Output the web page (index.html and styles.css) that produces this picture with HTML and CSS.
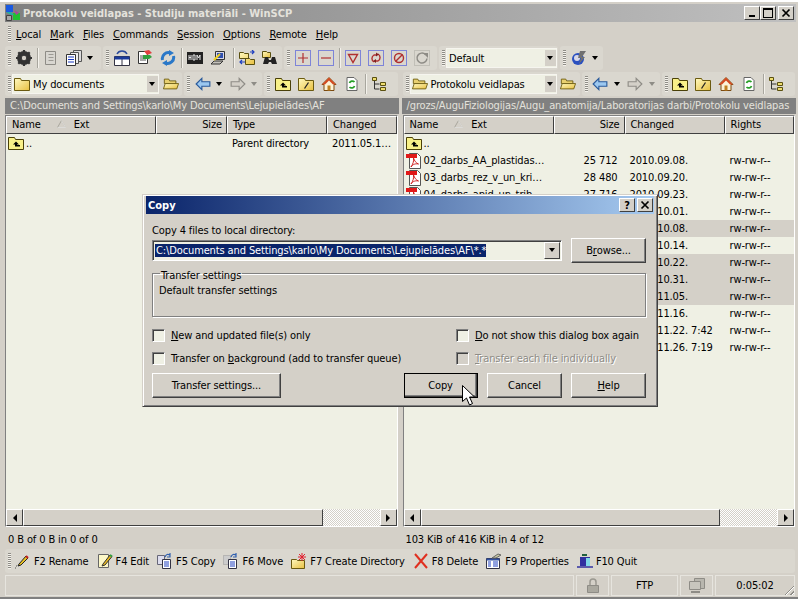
FILE: index.html
```html
<!DOCTYPE html>
<html lang="en">
<head>
<meta charset="UTF-8">
<title>Protokolu veidlapas - Studiju materiāli - WinSCP</title>
<link rel="stylesheet" href="styles.css">
</head>
<body>
<svg class="defs" width="0" height="0">
  <defs>
    <linearGradient id="fy" x1="0" y1="0" x2="1" y2="1"><stop offset="0" stop-color="#fff9c0"/><stop offset="1" stop-color="#e8c040"/></linearGradient>
    <symbol id="x" viewBox="0 0 10 10"><path d="M1.500 1.500l7 7M8.500 1.500l-7 7" stroke="#000" stroke-width="1.700"/></symbol>
    <symbol id="sort-up" viewBox="0 0 9 8"><path d="M4.500 .500L.500 7.500h8z" fill="none" stroke="#a8a69e"/><path d="M.500 7.500h8L4.500 .500" fill="none" stroke="#fff" stroke-width=".6"/></symbol>
    <symbol id="folder" viewBox="0 0 16 16"><path d="M.500 2.500h6l1 2h8v10H.500z" fill="url(#fy)" stroke="#6b5a10"/></symbol>
    <symbol id="folder-open" viewBox="0 0 18 16"><path d="M1.500 2.500h5l1 2h7v3h-13z" fill="#e8d070" stroke="#6b5a10"/><path d="M.500 13.500l2-6h15l-2 6z" fill="url(#fy)" stroke="#6b5a10"/></symbol>
    <symbol id="folder-up" viewBox="0 0 16 16"><path d="M.500 2.500h6l1 2h8v10H.500z" fill="#f8f088" stroke="#4a4008"/><path d="M8 6.500l-3 3h2v2h5v-1.500H9v-.5h2z" fill="#000"/></symbol>
    <symbol id="folder-root" viewBox="0 0 16 16"><path d="M.500 2.500h6l1 2h8v10H.500z" fill="url(#fy)" stroke="#6b5a10"/><path d="M10.500 6.500l-4 6" stroke="#222" stroke-width="1.300"/></symbol>
    <symbol id="home" viewBox="0 0 16 16"><path d="M8 1.500L1 8.500h2v6h10v-6h2z" fill="#fbf4d8" stroke="#7a4a10"/><path d="M8 1.500L1 8.500h3L8 4.500l4 4h3z" fill="#d24a20"/><path d="M6.500 9.500h3v5h-3z" fill="#c08020"/></symbol>
    <symbol id="refresh" viewBox="0 0 16 16"><path d="M3 1.500h7l3 3v10H3z" fill="#fff" stroke="#666"/><path d="M5.500 7a3 3 0 0 1 5-1M10.500 10a3 3 0 0 1-5 1" fill="none" stroke="#28a028" stroke-width="1.800"/></symbol>
    <symbol id="tree" viewBox="0 0 16 16"><path d="M3.500 5v8h5M3.500 8h5" fill="none" stroke="#333"/><path d="M1.500 1.500h4v3h-4zM9.500 6.500h5v3h-5zM9.500 11.500h5v3h-5z" fill="#eedd70" stroke="#5a5010"/></symbol>
    <symbol id="arrow-back" viewBox="0 0 14 12"><path d="M1 6l5-5v3h7v4H6v3z" fill="#9cc8f0" stroke="#2a5a9a"/></symbol>
    <symbol id="arrow-fwd" viewBox="0 0 14 12"><path d="M13 6L8 1v3H1v4h7v3z" fill="#d4d0c8" stroke="#8e8c86"/></symbol>
    <symbol id="pdf" viewBox="0 0 16 16"><path d="M3.500.500h8l3 3v12h-11z" fill="#fff" stroke="#555"/><path d="M0 1h11v4H0z" fill="#e01818"/><path d="M5 14c2-3 3-6 2.500-9 1 3 2.500 5 5 6-3-.5-5.500 0-7.500 3z" fill="none" stroke="#d02020"/></symbol>
    <symbol id="gear" viewBox="0 0 16 16"><circle cx="8" cy="8" r="5" fill="none" stroke="#333" stroke-width="4"/><path d="M8 0v16M0 8h16M2.300 2.300l11.400 11.400M13.700 2.300L2.300 13.700" stroke="#333" stroke-width="2.200"/><circle cx="8" cy="8" r="2.200" fill="#d4d0c8"/></symbol>
    <symbol id="book" viewBox="0 0 16 16"><path d="M2.500 1.500h10v13h-10z" fill="#d8d6d0" stroke="#8e8c86"/><path d="M5.500 4.500h5M5.500 7.500h5M5.500 10.500h5" stroke="#9c9a94"/></symbol>
    <symbol id="docs" viewBox="0 0 16 16"><path d="M7.500 .500h8v11h-8z" fill="#ddd" stroke="#555"/><path d="M4.500 2.500h8v11h-8z" fill="#eee" stroke="#555"/><path d="M.500 4.500h9v11h-9z" fill="#fff" stroke="#333"/><path d="M2 7h6M2 9.500h6M2 12h6" stroke="#1a3ac0"/></symbol>
    <symbol id="sync" viewBox="0 0 16 16"><path d="M.500 6.500h15v9H.500z" fill="#fff" stroke="#334"/><path d="M8 6.500v9" stroke="#334"/><path d="M.500 6.500h15v3H.500z" fill="#1a3a9a"/><path d="M3 4c2-4 8-4 10 0" fill="none" stroke="#28489a" stroke-width="1.500"/></symbol>
    <symbol id="compare" viewBox="0 0 16 16"><path d="M1.500 1.500h9v12h-9z" fill="#fff" stroke="#333"/><path d="M3 6h6M3 8h6M3 10h6" stroke="#555"/><path d="M7 1l5-1 3 3-5 2z" fill="#e04040"/><path d="M6 5h7l2 2-3 2H6z" fill="#30a040"/></symbol>
    <symbol id="reload" viewBox="0 0 16 16"><path d="M2.500 10a6 6 0 0 1 8-7" fill="none" stroke="#2a78c8" stroke-width="3"/><path d="M13.500 6a6 6 0 0 1-8 7" fill="none" stroke="#2a78c8" stroke-width="3"/><path d="M9 0l5 3-5 3zM7 10v6l-5-3z" fill="#2a78c8"/></symbol>
    <symbol id="console" viewBox="0 0 16 12"><rect width="16" height="12" fill="#222"/><path d="M2 3v5M2 5.500h2M4 3v5M6 3h2v5H6zM10 8V3l1.500 3L13 3v5" fill="none" stroke="#e8e8e8"/></symbol>
    <symbol id="putty" viewBox="0 0 16 16"><path d="M5.500 1.500h9v8h-9z" fill="#d8d8e8" stroke="#333"/><path d="M7 3h6v5H7z" fill="#3050b0"/><path d="M1 14l3-3h9l-3 3z" fill="#c4c2bc" stroke="#333"/><path d="M4 10l6-6" stroke="#f0d020" stroke-width="2"/></symbol>
    <symbol id="dirs" viewBox="0 0 16 16"><path d="M.500 2.500h4l1 1h4v5h-9zM6.500 8.500h4l1 1h4v5h-9z" fill="url(#fy)" stroke="#5a5010"/><path d="M11 2h4M13 0l2 2-2 2M6 12H1M3 10l-2 2 2 2" fill="none" stroke="#2040c0" stroke-width="1.200"/></symbol>
    <symbol id="binoc" viewBox="0 0 16 16"><path d="M.500 1.500h4l1 1h3v5h-8z" fill="url(#fy)" stroke="#5a5010"/><path d="M3 7h3l1 3h2l1-3h3l2 7h-5l-1-2H7l-1 2H1z" fill="#222"/></symbol>
    <symbol id="mask-plus" viewBox="0 0 16 16"><rect x=".5" y=".5" width="15" height="15" fill="none" stroke="#2030e0" stroke-dasharray="1 1"/><path d="M3 8h10M8 3v10" stroke="#b03030" stroke-width="1.200"/></symbol>
    <symbol id="mask-minus" viewBox="0 0 16 16"><rect x=".5" y=".5" width="15" height="15" fill="none" stroke="#2030e0" stroke-dasharray="1 1"/><path d="M3 8h10" stroke="#b03030" stroke-width="1.200"/></symbol>
    <symbol id="mask-filter" viewBox="0 0 16 16"><rect x=".5" y=".5" width="15" height="15" fill="none" stroke="#2030e0" stroke-dasharray="1 1"/><path d="M3.500 4.500h9L8 12.500z" fill="none" stroke="#b03030" stroke-width="1.400"/></symbol>
    <symbol id="mask-invert" viewBox="0 0 16 16"><rect x=".5" y=".5" width="15" height="15" fill="none" stroke="#2030e0" stroke-dasharray="1 1"/><path d="M6 12a4 4 0 0 1 0-7h3M10 4a4 4 0 0 1 0 7H7" fill="none" stroke="#b03030" stroke-width="1.400"/><path d="M8 2.500l3 2-3 2zM8 9l-3 2 3 2z" fill="#802020"/></symbol>
    <symbol id="mask-clear" viewBox="0 0 16 16"><rect x=".5" y=".5" width="15" height="15" fill="none" stroke="#2030e0" stroke-dasharray="1 1"/><circle cx="8" cy="8" r="4.500" fill="none" stroke="#b03030" stroke-width="1.400"/><path d="M4.500 11.500l7-7" stroke="#b03030" stroke-width="1.400"/></symbol>
    <symbol id="mask-redo" viewBox="0 0 16 16"><rect x=".5" y=".5" width="15" height="15" fill="none" stroke="#a8a69e" stroke-dasharray="1 1"/><path d="M11.500 4.500a5 5 0 1 0 1.500 4" fill="none" stroke="#8e8c86" stroke-width="1.500"/><path d="M9 3h5v5z" fill="#8e8c86"/></symbol>
    <symbol id="pencil" viewBox="0 0 16 16"><path d="M4 11l7-8 2 2-7 7-3 1z" fill="#e8c020" stroke="#222"/><path d="M11 3l2 2" stroke="#c02020" stroke-width="2"/><path d="M0 15h2M1 13h2" stroke="#555" stroke-dasharray="1 1"/></symbol>
    <symbol id="edit" viewBox="0 0 16 16"><path d="M1.500 1.500h10v13h-10z" fill="#fdf8c8" stroke="#666"/><path d="M6 11l7-9 2 1.500L8 12l-3 1z" fill="#e8b820" stroke="#333"/><path d="M13 2l2 1.500" stroke="#30a040" stroke-width="2"/></symbol>
    <symbol id="copy" viewBox="0 0 16 16"><path d="M.500 2.500h7v9h-7z" fill="#dde" stroke="#667"/><path d="M5.500 6.500h8v9h-8z" fill="#fff" stroke="#334"/><path d="M7 9h5M7 11h5M7 13h5" stroke="#2040c0"/><path d="M8 4c1-3 3-3 5-2M13 0v4h-3" fill="none" stroke="#3060b0" stroke-width="1.200"/></symbol>
    <symbol id="move" viewBox="0 0 16 16"><path d="M.500 2.500h7v9h-7z" fill="#ccc" stroke="#999" stroke-dasharray="1 1"/><path d="M5.500 6.500h8v9h-8z" fill="#fff" stroke="#334"/><path d="M7 9h5M7 11h5M7 13h5" stroke="#2040c0"/><path d="M8 4c1-3 3-3 5-2M13 0v4h-3" fill="none" stroke="#3060b0" stroke-width="1.200"/></symbol>
    <symbol id="newdir" viewBox="0 0 16 16"><path d="M.500 6.500h5l1 1h7v8H.500z" fill="url(#fy)" stroke="#6b5a10"/><path d="M11 0v8M7 4h8M8 1l6 6M14 1L8 7" stroke="#e02030"/></symbol>
    <symbol id="del" viewBox="0 0 16 16"><path d="M2 1l12 14M14 1L2 15" stroke="#e03020" stroke-width="2"/></symbol>
    <symbol id="props" viewBox="0 0 16 16"><path d="M.500 5.500h13v10H.500z" fill="#fff" stroke="#334"/><path d="M.500 5.500h13v2H.500z" fill="#3050a0"/><path d="M2 9h3M7 9h5M2 11h3M7 11h5M2 13h3M7 13h5" stroke="#2040c0"/><path d="M6 5l6-4 3 1-5 3z" fill="#c8c8a0" stroke="#666"/></symbol>
    <symbol id="quit" viewBox="0 0 16 16"><path d="M5 1h5v2H5z" fill="#206040"/><path d="M3 4h10v9H3z" fill="#3030a0"/><path d="M9 5h4v8H9z" fill="#80d8e8"/><path d="M0 14h16" stroke="#3030a0" stroke-width="1.500"/></symbol>
    <symbol id="lock" viewBox="0 0 16 16"><path d="M5 7V4a3 3 0 0 1 6 0v3" fill="none" stroke="#9a9890" stroke-width="1.500"/><path d="M2.500 7.500h11v7h-11z" fill="#aaa89f" stroke="#8e8c86"/></symbol>
    <symbol id="pcs" viewBox="0 0 16 16"><path d="M5.500 .500h10v10h-10z" fill="#b8b6ae" stroke="#8e8c86"/><path d="M.500 3.500h11v8H.500z" fill="#c8c6be" stroke="#8e8c86"/><path d="M2 14h9" stroke="#8e8c86" stroke-width="2"/></symbol>
    <symbol id="winscp" viewBox="0 0 16 16"><path d="M1 0h7v7H1z" fill="#1a5ae0"/><path d="M8 8h7v7H8z" fill="#20c030"/><path d="M9 5l5 3-3 2z" fill="#b040a0"/><path d="M1 7h5l3 3H6z" fill="#20b0a0"/><path d="M1.500 10.500h5v5h-5z" fill="#a8a8a8" stroke="#444"/></symbol>
  </defs>
</svg>

<div class="window">
  <div class="titlebar">
    <svg class="title-icon"><use href="#winscp"/></svg>
    <span class="title-text">Protokolu veidlapas - Studiju materiāli - WinSCP</span>
    <div class="capbtns">
      <span class="capbtn"><i class="cap-min"></i></span>
      <span class="capbtn"><i class="cap-max"></i></span>
      <span class="capbtn gap-l"><svg class="cap-x"><use href="#x"/></svg></span>
    </div>
  </div>

  <div class="menubar">
    <i class="grip"></i>
    <span><u>L</u>ocal</span><span><u>M</u>ark</span><span><u>F</u>iles</span><span><u>C</u>ommands</span><span><u>S</u>ession</span><span><u>O</u>ptions</span><span><u>R</u>emote</span><span><u>H</u>elp</span>
  </div>

  <div class="toolrow">
    <div class="band">
      <i class="grip"></i>
      <span class="tb"><svg class="ic"><use href="#gear"/></svg></span>
      <i class="sep"></i>
      <span class="tb"><svg class="ic"><use href="#book"/></svg></span>
      <span class="tb"><svg class="ic"><use href="#docs"/></svg></span>
      <i class="drop"></i>
    </div>
    <div class="band tight">
      <i class="grip"></i>
      <span class="tb"><svg class="ic"><use href="#sync"/></svg></span>
      <span class="tb"><svg class="ic"><use href="#compare"/></svg></span>
      <span class="tb"><svg class="ic"><use href="#reload"/></svg></span>
      <i class="sep"></i>
      <span class="tb"><svg class="ic"><use href="#console"/></svg></span>
      <span class="tb"><svg class="ic"><use href="#putty"/></svg></span>
      <i class="sep sep-w"></i>
      <span class="tb"><svg class="ic"><use href="#dirs"/></svg></span>
      <span class="tb"><svg class="ic"><use href="#binoc"/></svg></span>
    </div>
    <div class="band">
      <i class="grip"></i>
      <span class="tb"><svg class="ic"><use href="#mask-plus"/></svg></span>
      <span class="tb"><svg class="ic"><use href="#mask-minus"/></svg></span>
      <i class="sep"></i>
      <span class="tb"><svg class="ic"><use href="#mask-filter"/></svg></span>
      <span class="tb"><svg class="ic"><use href="#mask-invert"/></svg></span>
      <span class="tb"><svg class="ic"><use href="#mask-clear"/></svg></span>
      <span class="tb"><svg class="ic"><use href="#mask-redo"/></svg></span>
    </div>
    <div class="band tight">
      <i class="grip"></i>
      <div class="combo session"><span class="combo-text">Default</span><i class="combo-btn"></i></div>
    </div>
    <div class="band tight">
      <i class="grip"></i>
      <span class="tb"><svg class="ic" viewBox="0 0 16 16"><circle cx="7" cy="9" r="6" fill="#2a50c0"/><circle cx="6" cy="8" r="3" fill="#d8d8e8"/><path d="M9 1h6l-4 6h3l-6 7 2-6H7z" fill="#707070"/></svg></span>
      <i class="drop"></i>
    </div>
  </div>

  <div class="panels">
    <div class="panel">
      <div class="toolrow">
        <div class="band flush">
          <i class="grip"></i>
          <div class="combo dir"><svg class="ic"><use href="#folder"/></svg><span class="combo-text">My documents</span><i class="combo-btn"></i></div>
          <span class="tb"><svg class="ic"><use href="#folder-open"/></svg></span>
        </div>
        <div class="band tight">
          <i class="grip"></i>
          <span class="tb"><svg class="ic"><use href="#arrow-back"/></svg></span>
          <i class="drop"></i>
          <span class="tb"><svg class="ic"><use href="#arrow-fwd"/></svg></span>
          <i class="drop off"></i>
        </div>
        <div class="band grow">
          <i class="grip"></i>
          <span class="tb"><svg class="ic"><use href="#folder-up"/></svg></span>
          <span class="tb"><svg class="ic"><use href="#folder-root"/></svg></span>
          <span class="tb"><svg class="ic"><use href="#home"/></svg></span>
          <span class="tb"><svg class="ic"><use href="#refresh"/></svg></span>
          <i class="sep"></i>
          <span class="tb"><svg class="ic"><use href="#tree"/></svg></span>
        </div>
      </div>
      <div class="pathbar path-local">C:\Documents and Settings\karlo\My Documents\Lejupielādes\AF</div>
      <div class="listbox">
        <div class="row-head cols">
          <span class="name-head">Name<svg class="sort"><use href="#sort-up"/></svg><em>Ext</em></span>
          <span class="num">Size</span><span>Type</span><span>Changed</span>
        </div>
        <div class="files">
          <div class="file cols">
            <span class="fname"><svg class="ic"><use href="#folder-up"/></svg>..</span>
            <span class="num"></span><span>Parent directory</span><span>2011.05.1…</span>
          </div>
        </div>
        <div class="hscroll">
          <span class="sb-btn"><i class="arr-l"></i></span>
          <span class="sb-thumb"></span>
          <span class="sb-track"></span>
          <span class="sb-btn"><i class="arr-r"></i></span>
        </div>
      </div>
      <div class="summary">0 B of 0 B in 0 of 0</div>
    </div>

    <div class="panel">
      <div class="toolrow">
        <div class="band flush">
          <i class="grip"></i>
          <div class="combo dir"><svg class="ic"><use href="#folder-open"/></svg><span class="combo-text">Protokolu veidlapas</span><i class="combo-btn"></i></div>
          <span class="tb"><svg class="ic"><use href="#folder-open"/></svg></span>
        </div>
        <div class="band tight">
          <i class="grip"></i>
          <span class="tb"><svg class="ic"><use href="#arrow-back"/></svg></span>
          <i class="drop"></i>
          <span class="tb"><svg class="ic"><use href="#arrow-fwd"/></svg></span>
          <i class="drop off"></i>
        </div>
        <div class="band grow">
          <i class="grip"></i>
          <span class="tb"><svg class="ic"><use href="#folder-up"/></svg></span>
          <span class="tb"><svg class="ic"><use href="#folder-root"/></svg></span>
          <span class="tb"><svg class="ic"><use href="#home"/></svg></span>
          <span class="tb"><svg class="ic"><use href="#refresh"/></svg></span>
          <i class="sep"></i>
          <span class="tb"><svg class="ic"><use href="#tree"/></svg></span>
        </div>
      </div>
      <div class="pathbar path-remote">/grozs/AuguFiziologijas/Augu_anatomija/Laboratorijas darbi/Protokolu veidlapas</div>
      <div class="listbox">
        <div class="row-head cols">
          <span class="name-head">Name<svg class="sort"><use href="#sort-up"/></svg><em>Ext</em></span>
          <span class="num">Size</span><span>Changed</span><span>Rights</span>
        </div>
        <div class="files">
          <div class="file cols"><span class="fname"><svg class="ic"><use href="#folder-up"/></svg>..</span><span></span><span></span><span></span></div>
          <div class="file cols"><span class="fname"><svg class="ic"><use href="#pdf"/></svg>02_darbs_AA_plastidas…</span><span class="num">25 712</span><span>2010.09.08.</span><span>rw-rw-r--</span></div>
          <div class="file cols"><span class="fname"><svg class="ic"><use href="#pdf"/></svg>03_darbs_rez_v_un_kri…</span><span class="num">28 480</span><span>2010.09.20.</span><span>rw-rw-r--</span></div>
          <div class="file cols"><span class="fname"><svg class="ic"><use href="#pdf"/></svg>04_darbs_apid_un_trib…</span><span class="num">27 716</span><span>2010.09.23.</span><span>rw-rw-r--</span></div>
          <div class="file cols"><span class="fname"></span><span></span><span>2010.10.01.</span><span>rw-rw-r--</span></div>
          <div class="file cols picked"><span class="fname"></span><span></span><span>2010.10.08.</span><span>rw-rw-r--</span></div>
          <div class="file cols"><span class="fname"></span><span></span><span>2010.10.14.</span><span>rw-rw-r--</span></div>
          <div class="file cols picked"><span class="fname"></span><span></span><span>2010.10.22.</span><span>rw-rw-r--</span></div>
          <div class="file cols picked"><span class="fname"></span><span></span><span>2010.10.31.</span><span>rw-rw-r--</span></div>
          <div class="file cols picked"><span class="fname"></span><span></span><span>2010.11.05.</span><span>rw-rw-r--</span></div>
          <div class="file cols"><span class="fname"></span><span></span><span>2010.11.16.</span><span>rw-rw-r--</span></div>
          <div class="file cols"><span class="fname"></span><span></span><span>2010.11.22. 7:42</span><span>rw-rw-r--</span></div>
          <div class="file cols"><span class="fname"></span><span></span><span>2010.11.26. 7:19</span><span>rw-rw-r--</span></div>
        </div>
        <div class="hscroll">
          <span class="sb-btn"><i class="arr-l"></i></span>
          <span class="sb-thumb"></span>
          <span class="sb-track"></span>
          <span class="sb-btn"><i class="arr-r"></i></span>
        </div>
      </div>
      <div class="summary">103 KiB of 416 KiB in 4 of 12</div>
    </div>
  </div>

  <div class="keybar">
    <i class="grip"></i>
    <span class="key"><svg class="ic"><use href="#pencil"/></svg>F2 Rename</span>
    <span class="key"><svg class="ic"><use href="#edit"/></svg>F4 Edit</span>
    <span class="key"><svg class="ic"><use href="#copy"/></svg>F5 Copy</span>
    <span class="key"><svg class="ic"><use href="#move"/></svg>F6 Move</span>
    <span class="key"><svg class="ic"><use href="#newdir"/></svg>F7 Create Directory</span>
    <span class="key"><svg class="ic"><use href="#del"/></svg>F8 Delete</span>
    <span class="key"><svg class="ic"><use href="#props"/></svg>F9 Properties</span>
    <span class="key"><svg class="ic"><use href="#quit"/></svg>F10 Quit</span>
  </div>

  <div class="statusbar">
    <span class="st st-main"></span>
    <span class="st st-icon"><svg class="ic"><use href="#lock"/></svg></span>
    <span class="st st-proto">FTP</span>
    <span class="st st-icon"><svg class="ic"><use href="#pcs"/></svg></span>
    <span class="st st-time">0:05:02<i class="resize"></i></span>
  </div>
</div>

<div class="dialog">
  <div class="dlg-title">
    <span>Copy</span>
    <div class="capbtns">
      <span class="capbtn gap-r">?</span>
      <span class="capbtn"><svg class="cap-x"><use href="#x"/></svg></span>
    </div>
  </div>
  <div class="dlg-body">
    <div class="dlg-label">Copy 4 files to local directory:</div>
    <div class="dlg-path">
      <div class="dest"><span class="dest-sel">C:\Documents and Settings\karlo\My Documents\Lejupielādes\AF\*.*</span><i class="combo-btn"></i></div>
      <span class="push browse">B<u>r</u>owse...</span>
    </div>
    <fieldset class="group">
      <legend>Transfer settings</legend>
      <div>Default transfer settings</div>
    </fieldset>
    <div class="checks">
      <div class="check-col">
        <label><i class="box"></i><span><u>N</u>ew and updated file(s) only</span></label>
        <label><i class="box"></i><span>Transfer on <u>b</u>ackground (add to transfer queue)</span></label>
      </div>
      <div class="check-col">
        <label><i class="box"></i><span><u>D</u>o not show this dialog box again</span></label>
        <label class="disabled"><i class="box"></i><span><u>T</u>ransfer each file individually</span></label>
      </div>
    </div>
    <div class="dlg-btns">
      <span class="push wide">Transfer settings...</span>
      <span class="push default">Copy</span>
      <span class="push">Cancel</span>
      <span class="push"><u>H</u>elp</span>
    </div>
  </div>
</div>

<svg class="cursor" viewBox="0 0 14 21"><path d="M.500 .500v16l4-3.500 3 7 3-1.500-3-6.500h5z" fill="#fff" stroke="#000"/></svg>
</body>
</html>
```
FILE: styles.css
```css
* {
  box-sizing: border-box;
}
html, body {
  margin: 0;
  padding: 0;
}
body {
  width: 798px;
  height: 599px;
  overflow: hidden;
  position: relative;
  font-family: "DejaVu Sans Condensed", "DejaVu Sans", sans-serif;
  font-size: 11px;
  letter-spacing: -0.12px;
  color: #000;
  background-color: #d4d0c8;
}
i {
  font-style: normal;
}
.defs {
  position: absolute;
}
.ic {
  width: 16px;
  height: 16px;
  flex: none;
}

.window {
  width: 798px;
  height: 599px;
  padding: 2px 3px 1px 5px;
  border-top: 2px solid #fff;
  border-bottom: 2px solid #808080;
  display: flex;
  flex-direction: column;
}
.titlebar {
  height: 18px;
  flex: none;
  margin-right: -1px;
  display: flex;
  align-items: center;
  background: linear-gradient(to right, #808080, #c0c0c0);
  color: #e4e2dc;
  font-weight: bold;
  letter-spacing: 0;
}
.title-icon {
  width: 16px;
  height: 16px;
  margin-right: 2px;
}
.title-text {
  flex: 1;
}
.capbtns {
  display: flex;
  margin-right: 2px;
}
.capbtn {
  width: 16px;
  height: 14px;
  background-color: #d4d0c8;
  border: 1px solid;
  border-color: #fff #404040 #404040 #fff;
  display: flex;
  align-items: center;
  justify-content: center;
  font-size: 11px;
  font-weight: bold;
  color: #000;
}
.cap-x {
  width: 10px;
  height: 10px;
}
.gap-l {
  margin-left: 2px;
}
.gap-r {
  margin-right: 2px;
}
.cap-min {
  width: 6px;
  height: 2px;
  margin-top: 6px;
  background-color: #000;
}
.cap-max {
  width: 10px;
  height: 10px;
  border: 1px solid #000;
  border-top-width: 2px;
}

.grip {
  width: 3px;
  height: 16px;
  flex: none;
  background: repeating-linear-gradient(to bottom, #8e8c86 0 1px, #f4f2ec 1px 2px);
}
.menubar {
  height: 24px;
  flex: none;
  display: flex;
  align-items: center;
  gap: 9px;
  padding-left: 3px;
}
.menubar .grip {
  margin-right: -4px;
}

.toolrow {
  display: flex;
  height: 24px;
  flex: none;
  gap: 2px;
}
.band {
  display: flex;
  align-items: center;
  height: 24px;
  padding-left: 3px;
  padding-right: 4px;
  background-color: #dad7cf;
  border-radius: 3px;
}
.tight {
  padding-right: 1px;
}
.flush {
  padding-right: 0;
}
.grow {
  flex: 1;
}
.band .grip {
  margin-right: 1px;
}
.tb {
  width: 23px;
  height: 22px;
  flex: none;
  display: flex;
  align-items: center;
  justify-content: center;
}
.sep {
  width: 2px;
  height: 20px;
  margin-left: 2px;
  background-color: #a8a69e;
  border-right: 1px solid #f4f2ec;
}
.sep-w {
  margin-left: 4px;
}
.drop {
  width: 12px;
  height: 22px;
  position: relative;
}
.drop::after {
  content: "";
  position: absolute;
  left: 2px;
  top: 9px;
  border: 3px solid transparent;
  border-top: 4px solid #000;
  border-bottom: 0;
}
.drop.off::after {
  border-top-color: #8e8c86;
}

.combo {
  display: flex;
  align-items: center;
  height: 20px;
  background-color: #eff0e4;
  border: 1px solid #f6f5ef;
  padding-left: 1px;
}
.combo .ic {
  margin-right: 2px;
}
.combo-text {
  flex: 1;
  padding-left: 1px;
}
.combo-btn {
  width: 11px;
  height: 16px;
  flex: none;
  background-color: #d4d0c8;
  position: relative;
}
.combo-btn::after {
  content: "";
  position: absolute;
  left: 2px;
  top: 6px;
  border: 3px solid transparent;
  border-top: 4px solid #000;
  border-bottom: 0;
}
.session {
  width: 111px;
}
.dir {
  width: 147px;
}

.panels {
  flex: 1;
  display: flex;
  gap: 5px;
  min-height: 0;
  margin-top: 2px;
}
.panel {
  flex: 1;
  display: flex;
  flex-direction: column;
  min-width: 0;
}
.pathbar {
  height: 16px;
  flex: none;
  background-color: #808080;
  color: #e4e2dc;
  padding: 1px 5px 0;
  white-space: nowrap;
  overflow: hidden;
  margin-top: 2px;
}
.path-local {
  margin-right: -1px;
}
.path-remote {
  margin-left: -1px;
  margin-right: -1px;
}
.listbox {
  flex: 1;
  min-height: 0;
  display: flex;
  flex-direction: column;
  border: 1px solid;
  border-color: #808080 #fff #fff #808080;
  margin-top: 1px;
  background-color: #eff0e4;
}
.cols {
  display: grid;
  grid-template-columns: 150px 71px 100px 1fr;
}
.row-head {
  height: 18px;
  flex: none;
  background-color: #d4d0c8;
}
.row-head > span {
  border: 1px solid;
  border-color: #fff #404040 #404040 #fff;
  padding: 1px 4px 0 5px;
  white-space: nowrap;
}
.row-head .num {
  text-align: right;
}
.name-head {
  display: flex;
}
.name-head em {
  font-style: normal;
  margin-left: 8px;
}
.sort {
  width: 9px;
  height: 8px;
  margin: 2px 0 0 16px;
  flex: none;
}
.files {
  flex: 1;
  min-height: 0;
  padding-top: 0;
}
.file {
  height: 17px;
  align-items: center;
  white-space: nowrap;
}
.file:first-child {
  height: 18px;
}
.file > span {
  padding-left: 5px;
}
.file .fname {
  display: flex;
  align-items: center;
  gap: 2px;
  padding-left: 2px;
}
.file .num {
  text-align: right;
  padding-right: 7px;
}
.picked {
  background-color: #d4d0c8;
}
.hscroll {
  height: 17px;
  flex: none;
  display: flex;
  background-color: #d4d0c8;
}
.sb-btn {
  width: 17px;
  flex: none;
  border: 1px solid;
  border-color: #fff #404040 #404040 #fff;
  display: flex;
  align-items: center;
  justify-content: center;
}
.arr-l, .arr-r {
  border: 4px solid transparent;
}
.arr-l {
  border-left: 0;
  border-right: 4px solid #000;
}
.arr-r {
  border-right: 0;
  border-left: 4px solid #000;
}
.sb-thumb {
  flex: 1;
  border: 1px solid;
  border-color: #fff #404040 #404040 #fff;
}
.sb-track {
  width: 57px;
  flex: none;
  background: repeating-conic-gradient(#fff 0 25%, #d4d0c8 0 50%) 0 0 / 2px 2px;
}
.summary {
  height: 22px;
  flex: none;
  display: flex;
  align-items: center;
  padding: 3px 0 0 3px;
}

.keybar {
  height: 24px;
  flex: none;
  display: flex;
  align-items: center;
  padding-left: 3px;
  background-color: #dad7cf;
  border-radius: 3px;
}
.keybar .grip {
  margin-right: 4px;
}
.key {
  display: flex;
  align-items: center;
  gap: 3px;
  margin-right: 8px;
  white-space: nowrap;
}

.statusbar {
  height: 21px;
  flex: none;
  margin-top: 2px;
  display: flex;
  gap: 2px;
}
.st {
  border: 1px solid #e6e4de;
  display: flex;
  align-items: center;
  justify-content: center;
  position: relative;
}
.st-main {
  flex: 1;
}
.st-icon {
  width: 33px;
}
.st-proto {
  width: 67px;
}
.st-time {
  width: 80px;
}
.resize {
  position: absolute;
  right: 0;
  bottom: 0;
  width: 12px;
  height: 12px;
  background: repeating-linear-gradient(135deg, transparent 0 2px, #8e8c86 2px 3px, #fff 3px 4px);
  clip-path: polygon(100% 0, 100% 100%, 0 100%);
}

.dialog {
  position: absolute;
  left: 142px;
  top: 194px;
  width: 516px;
  height: 213px;
  background-color: #d4d0c8;
  border: 1px solid;
  border-color: #d4d0c8 #404040 #404040 #d4d0c8;
  box-shadow: inset 1px 1px 0 #fff, inset -1px -1px 0 #808080;
  padding: 1px 3px 3px;
  display: flex;
  flex-direction: column;
}
.dlg-title {
  height: 18px;
  flex: none;
  display: flex;
  align-items: center;
  padding-left: 2px;
  background: linear-gradient(to right, #0a246a, #a6caf0);
  color: #fff;
  font-weight: bold;
  letter-spacing: 0;
}
.dlg-title > span {
  flex: 1;
}
.dlg-title .capbtns {
  margin-right: 1px;
}
.dlg-body {
  flex: 1;
  padding: 10px 8px 0 6px;
  display: flex;
  flex-direction: column;
}
.dlg-label {
  height: 13px;
  line-height: 13px;
  flex: none;
}
.dlg-path {
  display: flex;
  justify-content: space-between;
  align-items: center;
  margin-top: 1px;
  height: 25px;
  flex: none;
}
.dest {
  width: 410px;
  height: 21px;
  display: flex;
  align-items: center;
  justify-content: space-between;
  padding: 0 1px 0 2px;
  background-color: #eff0e4;
  border: 1px solid;
  border-color: #808080 #fff #fff #808080;
  box-shadow: inset 1px 1px 0 #404040;
}
.dest-sel {
  background-color: #0a246a;
  color: #fff;
  white-space: nowrap;
  padding-left: 1px;
}
.dest .combo-btn {
  width: 16px;
  height: 17px;
  border: 1px solid;
  border-color: #fff #404040 #404040 #fff;
}
.dest .combo-btn::after {
  left: 4px;
  top: 5px;
}
.push {
  width: 75px;
  height: 25px;
  flex: none;
  display: flex;
  align-items: center;
  justify-content: center;
  background-color: #d4d0c8;
  border: 1px solid;
  border-color: #fff #404040 #404040 #fff;
  box-shadow: inset -1px -1px 0 #808080;
}
.wide {
  width: 129px;
  margin-right: auto;
}
.default {
  width: 74px;
  outline: 1px solid #000;
  outline-offset: -1px;
  border-width: 1px 2px 2px 1px;
}
.group {
  margin: 3px 0 0;
  padding: 0 6px;
  height: 51px;
  flex: none;
  border: 1px solid #808080;
  box-shadow: 1px 1px 0 #fff, inset 1px 1px 0 #fff;
}
.group legend {
  padding: 4px 1px 0;
  margin-left: 1px;
  line-height: 11px;
}
.group div {
  padding-top: 3px;
}
.checks {
  display: flex;
  margin-top: 11px;
}
.check-col {
  display: flex;
  flex-direction: column;
  gap: 9px;
  flex: 0 0 304px;
}
.check-col + .check-col {
  flex: 1;
}
.check-col label {
  display: flex;
  align-items: center;
  gap: 6px;
  height: 14px;
  white-space: nowrap;
}
.box {
  width: 13px;
  height: 13px;
  flex: none;
  background-color: #eff0e4;
  border: 1px solid;
  border-color: #808080 #fff #fff #808080;
  box-shadow: inset 1px 1px 0 #404040;
}
.disabled {
  color: #8e8c86;
  text-shadow: 1px 1px 0 #fff;
}
.disabled .box {
  background-color: #d4d0c8;
}
.dlg-btns {
  display: flex;
  gap: 9px;
  margin-top: 8px;
}
.cursor {
  position: absolute;
  left: 462px;
  top: 385px;
  width: 14px;
  height: 21px;
}
```
